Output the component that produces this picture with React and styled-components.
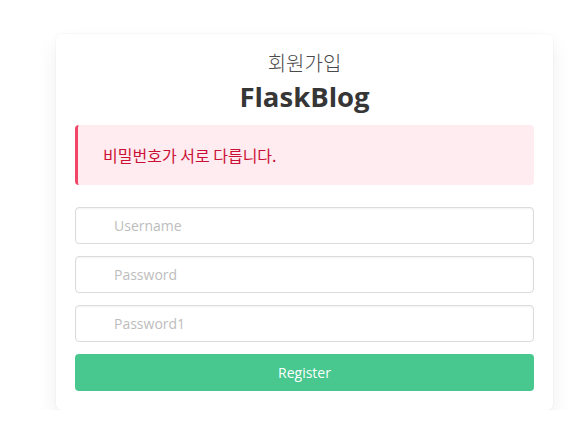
import styled, { createGlobalStyle } from "styled-components";

const Global = createGlobalStyle`
  body {
    margin: 0;
    background: #fff;
    font-family: "Open Sans", "Noto Sans", "Noto Sans CJK KR", sans-serif;
    color: #363636;
  }
`;

const Page = styled.div`
  padding: 34px 0 0 56px;
`;

const Card = styled.div`
  width: 497px;
  box-sizing: border-box;
  background: #fff;
  border-radius: 6px;
  box-shadow: 0 10px 20px rgba(10, 10, 10, 0.07), 0 0 0 1px rgba(10, 10, 10, 0.02);
  padding: 15px 19px 19px;
  display: flex;
  flex-direction: column;
`;

const Sub = styled.div`
  text-align: center;
  font-size: 20px;
  font-weight: 300;
  line-height: 28px;
  color: #4a4a4a;
  font-family: "Noto Sans CJK KR", sans-serif;
`;

const Title = styled.h1`
  margin: 0 0 8px;
  text-align: center;
  font-size: 27.5px;
  font-weight: 700;
  line-height: 40px;
  color: #363636;
`;

const Alert = styled.div`
  height: 60px;
  display: flex;
  align-items: center;
  padding-left: 25px;
  background: #feecf0;
  border-left: 3px solid #f14668;
  border-radius: 4px;
  color: #cc0f35;
  font-size: 16px;
  font-family: "Noto Sans CJK KR", sans-serif;
  margin-bottom: 22px;
`;

const Form = styled.form`
  display: flex;
  flex-direction: column;
  gap: 12px;
`;

const Input = styled.input`
  height: 37px;
  box-sizing: border-box;
  border: 1px solid #dbdbdb;
  border-radius: 4px;
  padding: 0 0 0 38px;
  font-family: inherit;
  font-size: 14px;
  color: #363636;
  box-shadow: inset 0 1px 2px rgba(10, 10, 10, 0.05);
  &::placeholder {
    color: #bdbdbd;
  }
`;

const Button = styled.button`
  height: 37px;
  border: none;
  border-radius: 4px;
  background: #48c78e;
  color: #fff;
  font-family: inherit;
  font-size: 14px;
`;

export default function App() {
  return (
    <Page>
      <Global />
      <Card>
        <Sub>회원가입</Sub>
        <Title>FlaskBlog</Title>
        <Alert>비밀번호가 서로 다릅니다.</Alert>
        <Form onSubmit={(e) => e.preventDefault()}>
          <Input placeholder="Username" />
          <Input type="password" placeholder="Password" />
          <Input type="password" placeholder="Password1" />
          <Button type="submit">Register</Button>
        </Form>
      </Card>
    </Page>
  );
}
